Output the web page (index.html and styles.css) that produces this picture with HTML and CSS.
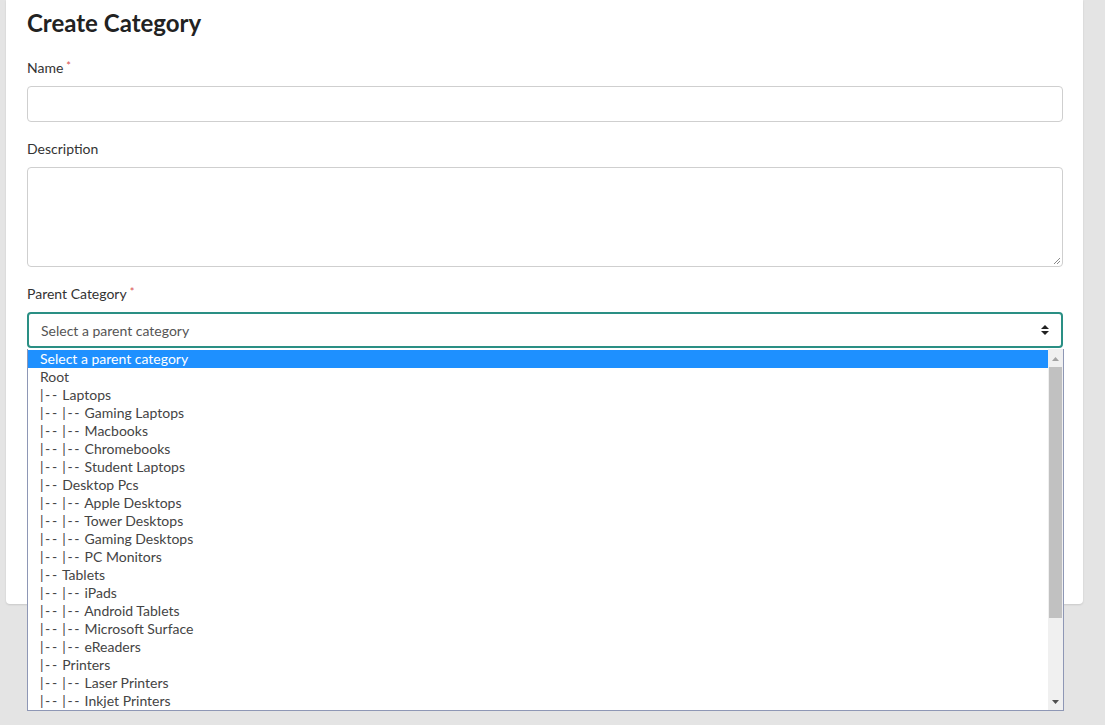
FILE: index.html
```html
<!DOCTYPE html>
<html lang="en">
<head>
<meta charset="utf-8">
<title>Create Category</title>
<link rel="stylesheet" href="styles.css">
</head>
<body>
<div class="page">
  <main class="card">
    <h1 class="title">Create Category</h1>
    <div class="field field-first">
      <label class="label">Name<span class="req">*</span></label>
      <div class="input"></div>
    </div>
    <div class="field">
      <label class="label">Description</label>
      <div class="textarea">
        <svg class="grip" width="8" height="8" viewBox="0 0 8 8"><path d="M7 1 L1 7 M7 4 L4 7" stroke="#8a8a8a" stroke-width="1" fill="none"/></svg>
      </div>
    </div>
    <div class="field">
      <label class="label">Parent Category<span class="req">*</span></label>
      <div class="select-wrap">
        <div class="select">
          <span class="select-text">Select a parent category</span>
          <svg class="updown" width="8" height="10" viewBox="0 0 8 10"><path d="M4 0 L8 4 L0 4 Z M0 6 L8 6 L4 10 Z" fill="#222"/></svg>
        </div>
        <div class="dropdown">
          <ul class="options">
            <li class="option selected">Select a parent category</li>
            <li class="option">Root</li>
            <li class="option"><span class="pfx">|--</span> Laptops</li>
            <li class="option"><span class="pfx">|--</span> <span class="pfx">|--</span> Gaming Laptops</li>
            <li class="option"><span class="pfx">|--</span> <span class="pfx">|--</span> Macbooks</li>
            <li class="option"><span class="pfx">|--</span> <span class="pfx">|--</span> Chromebooks</li>
            <li class="option"><span class="pfx">|--</span> <span class="pfx">|--</span> Student Laptops</li>
            <li class="option"><span class="pfx">|--</span> Desktop Pcs</li>
            <li class="option"><span class="pfx">|--</span> <span class="pfx">|--</span> Apple Desktops</li>
            <li class="option"><span class="pfx">|--</span> <span class="pfx">|--</span> Tower Desktops</li>
            <li class="option"><span class="pfx">|--</span> <span class="pfx">|--</span> Gaming Desktops</li>
            <li class="option"><span class="pfx">|--</span> <span class="pfx">|--</span> PC Monitors</li>
            <li class="option"><span class="pfx">|--</span> Tablets</li>
            <li class="option"><span class="pfx">|--</span> <span class="pfx">|--</span> iPads</li>
            <li class="option"><span class="pfx">|--</span> <span class="pfx">|--</span> Android Tablets</li>
            <li class="option"><span class="pfx">|--</span> <span class="pfx">|--</span> Microsoft Surface</li>
            <li class="option"><span class="pfx">|--</span> <span class="pfx">|--</span> eReaders</li>
            <li class="option"><span class="pfx">|--</span> Printers</li>
            <li class="option"><span class="pfx">|--</span> <span class="pfx">|--</span> Laser Printers</li>
            <li class="option"><span class="pfx">|--</span> <span class="pfx">|--</span> Inkjet Printers</li>
          </ul>
          <div class="scrollbar">
            <div class="sb-btn"><svg width="7" height="4" viewBox="0 0 7 4"><path d="M3.5 0 L7 4 L0 4 Z" fill="#a3a3a3"/></svg></div>
            <div class="sb-track"><div class="sb-thumb"></div></div>
            <div class="sb-btn"><svg width="7" height="4" viewBox="0 0 7 4"><path d="M0 0 L7 0 L3.5 4 Z" fill="#505050"/></svg></div>
          </div>
        </div>
      </div>
    </div>
  </main>
</div>
</body>
</html>
```

FILE: styles.css
```css
* { box-sizing: border-box; }
html, body { margin: 0; padding: 0; }
body {
  background: #e4e4e4;
  font-family: "Lato", "Open Sans", sans-serif;
  color: #333;
  height: 725px;
  overflow: hidden;
}
.page {
  padding: 0 22px 0 6px;
}
.card {
  background: #fff;
  border-radius: 0 0 4px 4px;
  box-shadow: 0 1px 2px rgba(0,0,0,0.12);
  padding: 8px 20px 256px 21px;
}
.title {
  margin: 0;
  font-size: 24px;
  line-height: 29px;
  font-weight: 700;
  color: #222;
}
.field { margin-top: 17px; }
.field-first { margin-top: 21px; }
.label {
  display: block;
  font-size: 14px;
  line-height: 20px;
  color: #333;
  margin-bottom: 8px;
}
.req {
  color: #d9534f;
  font-size: 11px;
  line-height: 0;
  vertical-align: 3px;
  margin-left: 3px;
}
.input {
  height: 36px;
  border: 1px solid #cfcfcf;
  border-radius: 4px;
}
.textarea {
  position: relative;
  height: 100px;
  border: 1px solid #cfcfcf;
  border-radius: 4px;
}
.grip {
  position: absolute;
  right: 1px;
  bottom: 1px;
}
.select-wrap { position: relative; }
.select {
  height: 36px;
  border: 2px solid #2a8f84;
  border-radius: 4px;
  display: flex;
  align-items: center;
  justify-content: space-between;
  padding: 0 12px 0 12px;
}
.select-text {
  font-size: 14px;
  color: #555;
}
.updown { display: block; }
.dropdown {
  position: absolute;
  left: 0;
  right: -1px;
  top: 37px;
  height: 362px;
  background: #fff;
  border: 1px solid #8e97b5;
  border-top: none;
  display: flex;
}
.options {
  list-style: none;
  margin: 0;
  padding: 1px 0 0 0;
  flex: 1;
  overflow: hidden;
}
.option {
  height: 18px;
  line-height: 18px;
  font-size: 14px;
  color: #444;
  padding-left: 12px;
  white-space: nowrap;
}
.pfx { letter-spacing: 1.6px; }
.option.selected {
  background: #1e90ff;
  color: #fff;
}
.scrollbar {
  width: 15px;
  background: #f0f0f0;
  display: flex;
  flex-direction: column;
  padding-top: 1px;
}
.sb-btn {
  height: 17px;
  display: flex;
  align-items: center;
  justify-content: center;
}
.sb-track {
  flex: 1;
  padding: 0 1px;
}
.sb-thumb {
  height: 251px;
  background: #c1c1c1;
}
```
